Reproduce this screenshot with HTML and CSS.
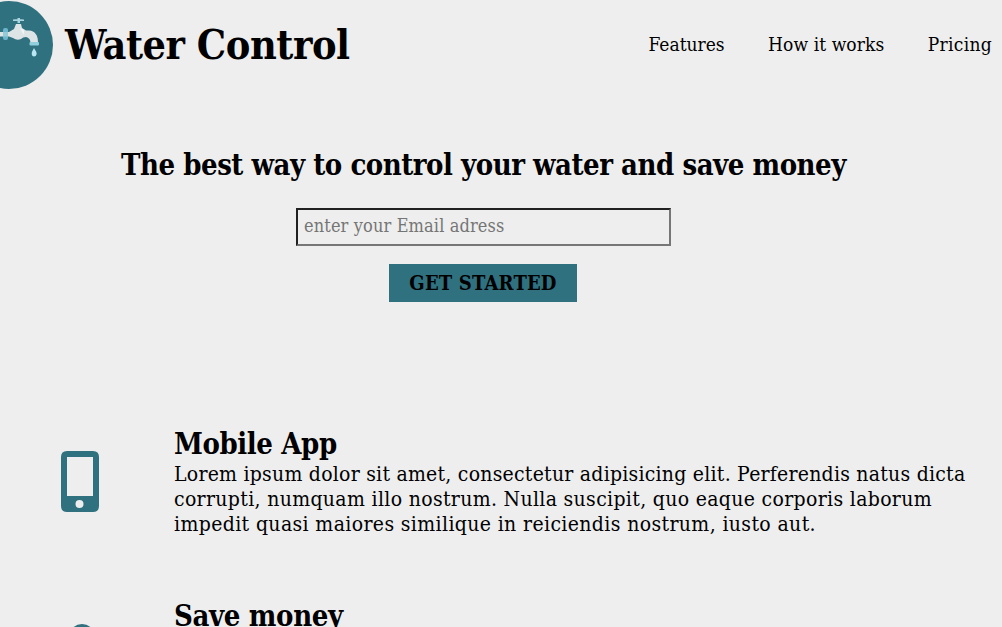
FILE: index.html
```html
<!DOCTYPE html>
<html lang="en">
<head>
<meta charset="utf-8">
<title>Water Control</title>
<link rel="stylesheet" href="styles.css">
</head>
<body>
<header class="header">
  <svg class="logo" viewBox="0 0 53 90" aria-hidden="true">
    <circle cx="9" cy="45" r="44" fill="#307180"/>
    <path d="M0 32H9L14 29L16 24H21L22 28L26 30.5H29Q38 31 38 43H30.5Q30.5 38 26 37Q23 37 21 39Q17 41 13 38L9 36.5H0Z" fill="#dce4e6"/>
    <path d="M20 28L24 30V35Q22 33 20 28Z" fill="#f0f4f5"/>
    <path d="M13 19.5Q18 18.5 24 19.5V21H13ZM17.5 18H20V23H17.5Z" fill="#a8d5df"/>
    <rect x="3" y="28" width="5" height="12" rx="2" fill="#6db5cc"/>
    <rect x="3" y="32" width="5" height="4.5" fill="#94cbd9"/>
    <rect x="29.5" y="42" width="9.5" height="3.5" rx="1" fill="#91cfdc"/>
    <path d="M34 48Q31.5 52 31.7 54Q32 56.5 34 56.5T36.7 54Q36.7 52 34 48Z" fill="#b9e6f0"/>
  </svg>
  <h1 class="brand">Water Control</h1>
  <nav class="nav"><a class="features">Features</a><a class="works">How it works</a><a class="pricing">Pricing</a></nav>
</header>
<main>
  <section class="hero">
    <h2 class="headline">The best way to control your water and save money</h2>
    <input class="email" type="email" placeholder="enter your Email adress">
    <button class="start">GET STARTED</button>
  </section>
  <section class="feature">
    <svg class="phone" viewBox="0 0 38 61" aria-hidden="true"><path fill="#307180" fill-rule="evenodd" d="M6 0H32Q38 0 38 6V55Q38 61 32 61H6Q0 61 0 55V6Q0 0 6 0ZM6 6V45H32V6ZM18.5 49A4 4 0 1 0 18.5 57A4 4 0 1 0 18.5 49Z"/></svg>
    <div class="copy">
      <h2 class="title mobile">Mobile App</h2>
      <p class="text"><span class="l1">Lorem ipsum dolor sit amet, consectetur adipisicing elit. Perferendis natus dicta</span><br><span class="l2">corrupti, numquam illo nostrum. Nulla suscipit, quo eaque corporis laborum</span><br><span class="l3">impedit quasi maiores similique in reiciendis nostrum, iusto aut.</span></p>
    </div>
  </section>
  <section class="feature second">
    <svg class="coin" viewBox="0 0 38 61" aria-hidden="true"><circle cx="21" cy="14" r="13" fill="#307180"/></svg>
    <div class="copy"><h2 class="title save">Save money</h2></div>
  </section>
</main>
</body>
</html>
```
FILE: styles.css
```css
* { box-sizing: border-box; margin: 0; padding: 0; }
body { height: 627px; overflow: hidden; background: #eee; color: #000; font-family: "DejaVu Serif Condensed", "DejaVu Serif", serif; font-stretch: condensed; }
.header { display: flex; align-items: center; height: 90px; padding-right: 10px; }
.logo { width: 53px; height: 90px; flex: none; }
.brand { margin-left: 12px; font-size: 41px; line-height: 50px; letter-spacing: -0.45px; white-space: nowrap; }
.nav { display: flex; gap: 43.5px; margin-left: auto; padding-bottom: 2px; font-size: 19px; white-space: nowrap; }
.works { letter-spacing: 0.08px; }
.pricing { letter-spacing: 0.3px; }
.hero { display: flex; flex-direction: column; align-items: center; width: 967px; padding-top: 57px; }
.headline { font-size: 29px; line-height: 36px; letter-spacing: -0.47px; white-space: nowrap; }
.email { width: 375px; height: 38px; margin-top: 25px; padding: 0 6px 3px; border: 2px inset #767676; background: transparent; font: inherit; font-size: 18px; letter-spacing: 0.13px; }
.email::placeholder { color: #757575; }
.start { width: 188px; height: 38px; margin-top: 18px; margin-right: 1px; border: 0; background: #307180; font: inherit; font-size: 20px; font-weight: bold; letter-spacing: 0.18px; white-space: nowrap; }
.feature { display: flex; height: 112px; margin-top: 124px; padding-left: 61px; }
.phone, .coin { flex: none; width: 38px; height: 61px; margin-top: 25px; }
.copy { margin-left: 75px; }
.title { font-size: 29px; line-height: 36px; letter-spacing: -0.4px; white-space: nowrap; }
.text { font-size: 21px; line-height: 25px; white-space: nowrap; }
.l1 { letter-spacing: 0.24px; }
.l2 { letter-spacing: 0.33px; }
.l3 { letter-spacing: 0.37px; }
.save { letter-spacing: -0.35px; }
.second { margin-top: 60px; }
```
